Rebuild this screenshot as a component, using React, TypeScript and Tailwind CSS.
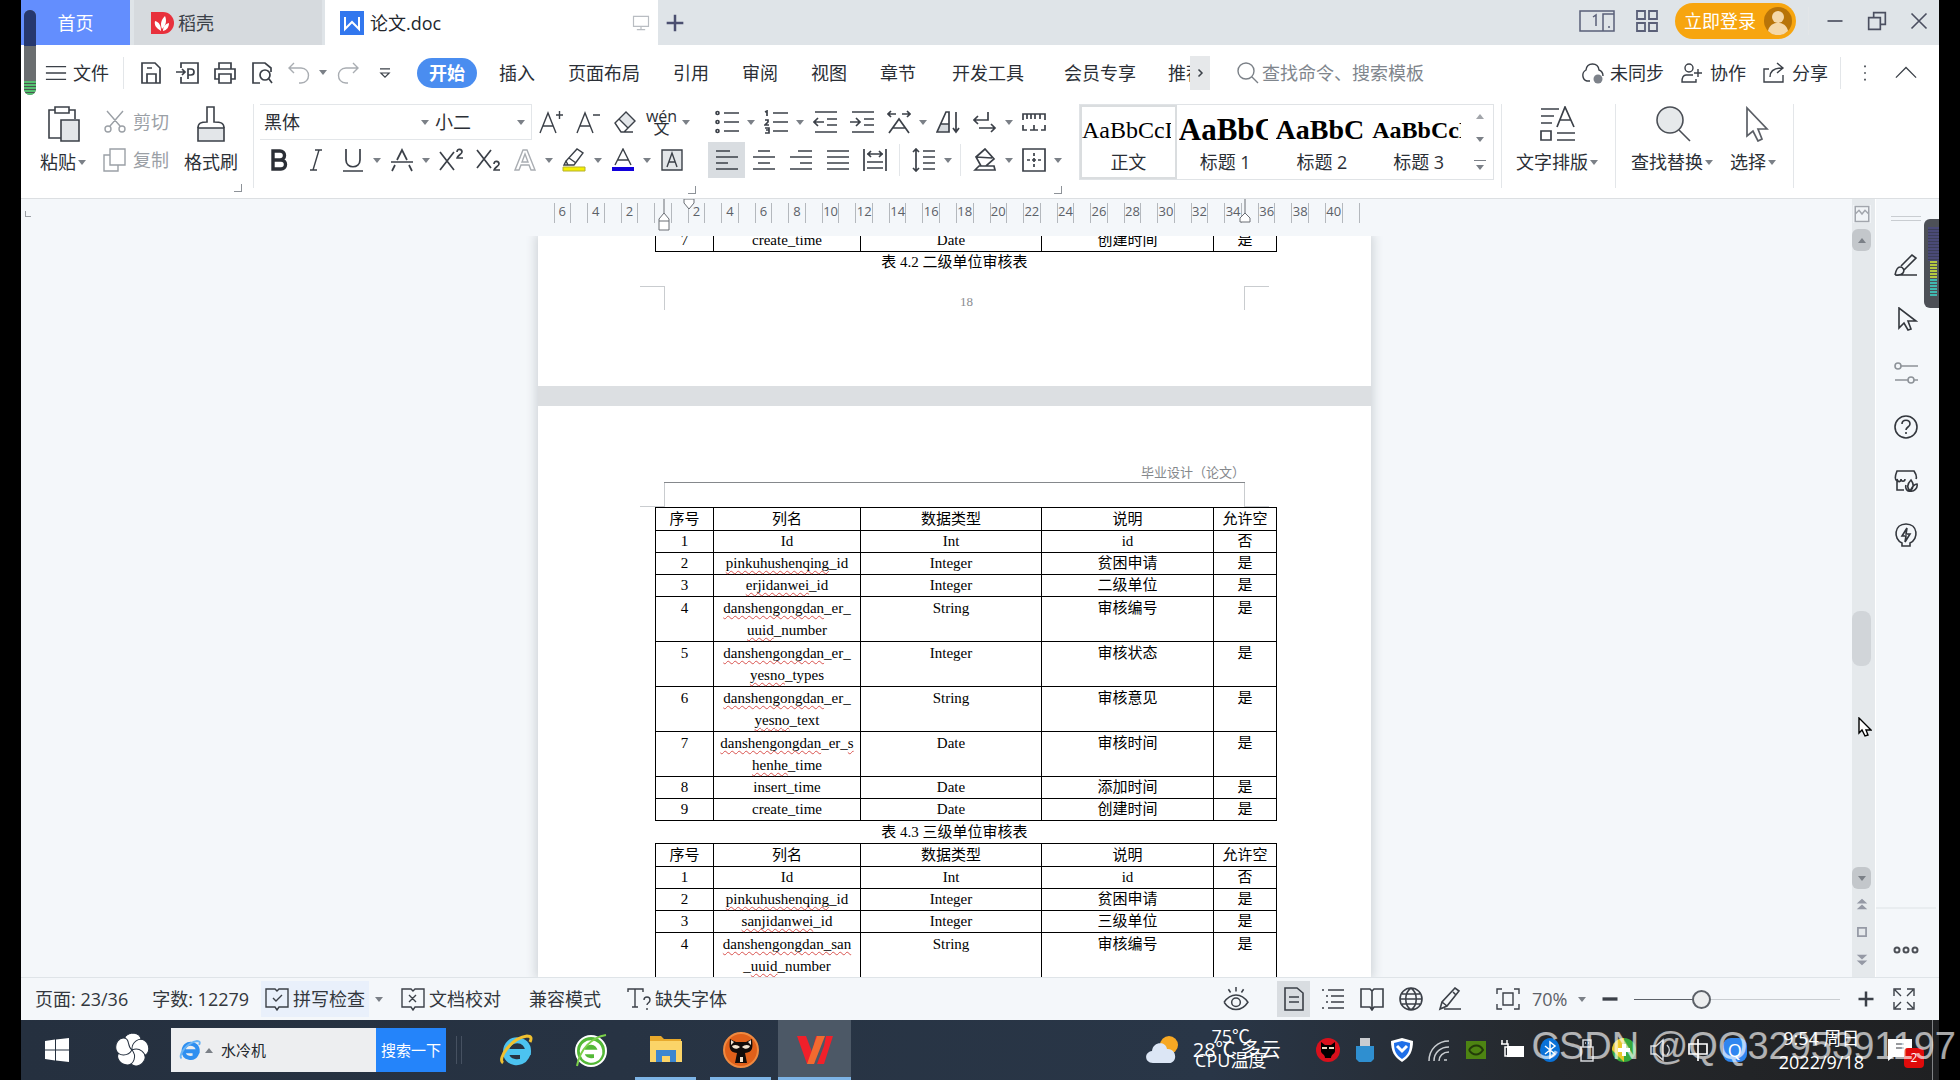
import React from 'react';
import clsx from 'clsx';

type IconProps = {
  d: string;
  size?: string;
  tone?: string;
  weight?: string;
  fill?: string;
  extra?: React.ReactNode;
  className?: string;
};

const Icon: React.FC<IconProps> = ({
  d,
  size = 'size-6',
  tone = 'stroke-[#3b4048]',
  weight = 'stroke-[1.4]',
  fill = 'fill-none',
  extra,
  className,
}) => (
  <svg viewBox="0 0 24 24" className={clsx('shrink-0', size, tone, weight, fill, className)}>
    {extra}
    <path d={d} />
  </svg>
);

const Caret: React.FC<{ className?: string }> = ({ className }) => (
  <span className={clsx('flex w-3 shrink-0 justify-center', className)}>
    <svg viewBox="0 0 8 5" className="h-[5px] w-2 fill-[#7b8087]"><path d="M0 0h8L4 5z" /></svg>
  </span>
);

const Tool: React.FC<{ label: string; active?: boolean; children: React.ReactNode }> = ({ label, active, children }) => (
  <button type="button" aria-label={label} className={clsx('flex h-9 w-[37px] shrink-0 items-center justify-center', active && 'bg-[#d9dde1]')}>
    {children}
  </button>
);

const Line: React.FC<{ className?: string }> = ({ className }) => (
  <span className={clsx('w-px shrink-0 bg-[#e3e6e9]', className ?? 'h-8')} />
);

const Corner = () => <span className="mt-1.5 -mr-1 h-2 w-2 self-end border-r border-b border-[#8d9298]" />;

/* ---------- title bar ---------- */

const TitleBar = () => (
  <header className="flex h-[45px] shrink-0 items-stretch bg-[#dfe4e8] text-lg leading-6">
    <button type="button" className="w-[109px] bg-[#638efe] text-center text-white">首页</button>
    <button type="button" className="ml-1 flex w-[188px] items-center gap-1 bg-[#d6dade] px-4 text-[#3b4048]">
      <svg viewBox="0 0 24 24" className="size-6">
        <path d="M1 1h12a11 11 0 0 1 0 22H1z" className="fill-[#e8303c]" />
        <path d="M11 20C6 17 4 14 5 10c4 1 6 4 6 10zM12 18c-2-5-1-9 3-13 2 5 1 9-3 13zM13 20c0-4 2-7 6-8 0 4-2 7-6 8z" className="fill-white" />
      </svg>
      稻壳
    </button>
    <button type="button" className="ml-[3px] flex w-[333px] items-center gap-1.5 bg-white px-[15px] text-[#23272d]">
      <svg viewBox="0 0 24 24" className="size-6">
        <path d="M0 0h24v24H0z" className="fill-[#3277ee]" />
        <path d="M5 6v12l7-7 7 7V6" className="fill-none stroke-white stroke-2" />
      </svg>
      论文.doc
      <Icon d="M3 4h18v12H3zM12 16v4M7 20h10" size="size-5" tone="stroke-[#b9bdc2]" className="ml-auto -mr-2" />
    </button>
    <button type="button" aria-label="新建" className="flex w-[34px] items-center justify-center">
      <Icon d="M12 2v20M2 12h20" size="size-5" tone="stroke-[#4b4f70]" weight="stroke-[3]" />
    </button>
    <div className="ml-auto flex items-center pb-1">
      <button type="button" aria-label="窗口" className="px-4">
        <svg viewBox="0 0 36 24" className="h-6 w-9 fill-none stroke-[#5a5f78] stroke-[1.5]">
          <path d="M1 2h34v20H1zM24 5h11v17H24zM14 8l3-2v11M29 18h2" />
        </svg>
      </button>
      <button type="button" aria-label="应用" className="pl-1 pr-4">
        <Icon d="M2 2h8v8H2zM14 2h8v8h-8zM2 14h8v8H2zM14 14h8v8h-8z" tone="stroke-[#5a5f78]" weight="stroke-[1.8]" />
      </button>
      <button type="button" className="flex h-9 w-[121px] items-center justify-between rounded-full bg-[#f7a50f] pl-[9px] pr-1 text-white">
        立即登录
        <svg viewBox="0 0 28 28" className="size-7">
          <circle cx="14" cy="14" r="14" className="fill-[#b87408]" />
          <circle cx="14" cy="10" r="6" className="fill-[#f5d8a8]" />
          <path d="M4 24c2-11 18-11 20 0a14 14 0 0 1-20 0z" className="fill-[#f5d8a8]" />
        </svg>
      </button>
      <Line className="ml-3 h-7" />
      <button type="button" aria-label="最小化" className="ml-4"><Icon d="M3 12h18" size="size-5" tone="stroke-[#4b4f60]" weight="stroke-2" /></button>
      <button type="button" aria-label="还原" className="ml-[22px]"><Icon d="M2 8h14v14H2zM8 8V2h14v14h-6" size="size-5" tone="stroke-[#4b4f60]" weight="stroke-2" /></button>
      <button type="button" aria-label="关闭" className="ml-[22px] mr-2.5"><Icon d="M3 3l18 18M21 3L3 21" size="size-5" tone="stroke-[#4b4f60]" weight="stroke-2" /></button>
    </div>
  </header>
);

/* ---------- menu row ---------- */

const QUICK = [
  { label: '保存', d: 'M3 2h13l5 5v15H3zM8 22v-9h9v9M8 7h5' },
  { label: '输出为PDF', d: 'M5 7V2h17v20H5v-6M0 11h9M6 8l3 3-3 3M12 18V8h3a3 3 0 0 1 0 6h-3' },
  { label: '打印', d: 'M6 8V2h12v6M6 18H2V8h20v10h-4M6 13h12v9H6z' },
  { label: '打印预览', d: 'M10 22H3V2h12l6 5v4M19 18l3 4M15 9a5 5 0 1 1 0 10 5 5 0 0 1 0-10' },
];

const MenuRow = () => (
  <nav className="flex h-[55px] shrink-0 items-center pl-6 text-lg leading-6 text-[#2b2f36]">
    <button type="button" className="flex items-center gap-1.5 whitespace-nowrap">
      <Icon d="M1 5h22M1 12h22M1 19h22" size="size-[22px]" />文件
    </button>
    <Line className="ml-3.5 h-8" />
    <div className="ml-2 flex">
      {QUICK.map((q) => (
        <Tool key={q.label} label={q.label}><Icon d={q.d} weight="stroke-[1.7]" /></Tool>
      ))}
      <Tool label="撤销"><Icon d="M7 2L2 7l5 5M2 7h12c10 0 10 15 0 15h-2" tone="stroke-[#a9adb2]" /></Tool>
      <span className="flex items-center"><Caret /></span>
      <Tool label="恢复"><Icon d="M17 2l5 5-5 5M22 7H10C0 7 0 22 10 22h2" tone="stroke-[#a9adb2]" /></Tool>
      <Tool label="更多"><Icon d="M6 7h12M7 12l5 5 5-5z" size="size-5" /></Tool>
    </div>
    <button type="button" className="ml-3.5 h-[30px] w-[60px] shrink-0 rounded-full bg-[#4a8df0] font-bold text-white">开始</button>
    <div className="ml-[22px] flex gap-[33px] whitespace-nowrap">
      {['插入', '页面布局', '引用', '审阅', '视图', '章节'].map((m) => (
        <button key={m} type="button">{m}</button>
      ))}
    </div>
    <div className="ml-9 flex gap-10 whitespace-nowrap">
      <button type="button">开发工具</button>
      <button type="button">会员专享</button>
    </div>
    <button type="button" className="ml-8 w-[22px] overflow-hidden whitespace-nowrap text-left">推荐</button>
    <button type="button" aria-label="展开" className="flex h-[34px] w-5 items-center justify-center bg-[#e6e8ea]">
      <Icon d="M9 5l7 7-7 7" size="size-3" weight="stroke-[3]" />
    </button>
    <label className="ml-[26px] flex items-center gap-0.5">
      <Icon d="M10 2a8 8 0 1 1 0 16 8 8 0 0 1 0-16M16 16l6 6" tone="stroke-[#7b8087]" />
      <span className="sr-only">搜索</span>
      <input type="text" placeholder="查找命令、搜索模板" className="w-44 outline-none placeholder:text-[#80868d]" />
    </label>
    <div className="ml-auto flex items-center whitespace-nowrap">
      <button type="button" className="flex items-center gap-1.5">
        <Icon d="M10 20H7a6 6 0 0 1-1-11C7 1 18 1 19 9c3 1 4 3 4 6" extra={<circle cx="18" cy="18" r="4.5" className="fill-[#7d828a] stroke-none" />} />未同步
      </button>
      <button type="button" className="ml-4 flex items-center gap-1.5">
        <Icon d="M9 3a4 4 0 1 1 0 8 4 4 0 0 1 0-8M13 14H6c-3 0-4 2-4 7h14v-3M18 8v8M14 12h8" />协作
      </button>
      <button type="button" className="ml-4 flex items-center gap-1.5">
        <Icon d="M7 8H2v13h19v-7M8 16c0-6 4-9 12-9M15 2l6 5-6 5" />分享
      </button>
      <Line className="ml-3 h-8" />
      <button type="button" aria-label="更多选项" className="ml-3.5"><Icon d="M11 4h2M11 12h2M11 20h2" size="size-5" weight="stroke-2" /></button>
      <button type="button" aria-label="收起功能区" className="ml-5 mr-[22px]"><Icon d="M1 17L12 6l11 11" size="size-[22px]" /></button>
    </div>
  </nav>
);

/* ---------- ribbon ---------- */

const STYLES = [
  { name: '正文', cls: 'text-2xl', on: true },
  { name: '标题 1', cls: 'text-[31px] font-bold', on: false },
  { name: '标题 2', cls: 'text-[28px] font-bold', on: false },
  { name: '标题 3', cls: 'text-2xl font-bold', on: false },
];

const BigButton: React.FC<{ label: string; caret?: boolean; children: React.ReactNode }> = ({ label, caret, children }) => (
  <button type="button" className="flex flex-col items-center gap-1 whitespace-nowrap pt-0.5">
    {children}
    <span className="flex items-center leading-8">{label}{caret && <Caret />}</span>
  </button>
);

const Ribbon = () => (
  <section className="flex h-[99px] shrink-0 items-start border-b border-[#dcdfe2] pt-1 text-lg text-[#2b2f36]">
    <div className="flex gap-[15px] pl-[19px]">
      <BigButton label="粘贴" caret>
        <svg viewBox="0 0 34 36" className="h-9 w-[34px] fill-none stroke-[#3b4048] stroke-[1.6]">
          <path d="M8 4H2v28h12M22 4h6v9M8 1h14v6H8z" />
          <path d="M14 14h18v21H14z" className="fill-[#e3e6e9]" />
        </svg>
      </BigButton>
      <div className="flex flex-col gap-0.5 text-[#9ba0a6]">
        <button type="button" className="flex h-9 items-center gap-1.5">
          <Icon d="M4 1l13 15M20 1L7 16M5 16a3 3 0 1 1 0 6 3 3 0 0 1 0-6M19 16a3 3 0 1 1 0 6 3 3 0 0 1 0-6" tone="stroke-[#9ba0a6]" />剪切
        </button>
        <button type="button" className="flex h-9 items-center gap-1.5">
          <Icon d="M7 1h15v16H7zM7 7H1v16h14v-6" tone="stroke-[#9ba0a6]" />复制
        </button>
      </div>
      <div className="flex flex-col">
        <BigButton label="格式刷">
          <svg viewBox="0 0 34 36" className="h-9 w-[34px] fill-none stroke-[#3b4048] stroke-[1.6]">
            <path d="M4 22h26v13H4z" className="fill-[#e3e6e9]" />
            <path d="M4 22c0-5 3-6 9-6V1h7v15c7 0 10 1 10 6" />
          </svg>
        </BigButton>
        <Corner />
      </div>
    </div>
    <Line className="ml-[15px] h-[84px]" />

    <div className="ml-1.5 flex flex-col gap-0.5">
      <div className="flex items-center">
        <div className="flex h-9 border-y border-[#e3e6e9]">
          <label className="flex w-[171px] items-center">
            <span className="sr-only">字体</span>
            <select className="w-full appearance-none pl-1 outline-none"><option>黑体</option></select><Caret />
          </label>
          <label className="flex w-[101px] items-center border-r border-[#e3e6e9] pr-1">
            <span className="sr-only">字号</span>
            <select className="w-full appearance-none pl-1 outline-none"><option>小二</option></select><Caret />
          </label>
        </div>
        <Tool label="增大字号"><Icon d="M1 23L9 3l8 20M4 16h10M17 5h7M20.500 1v8" /></Tool>
        <Tool label="减小字号"><Icon d="M1 23L9 3l8 20M4 16h10M17 5h7" /></Tool>
        <Tool label="清除格式"><Icon d="M2 13L13 2l9 9-11 11H8zM6 9l9 9M8 22h12" extra={<path d="M7 9l6-7 9 9-7 7z" className="fill-[#e3e6e9] stroke-none" />} /></Tool>
        <Tool label="拼音指南"><span className="flex flex-col items-center text-base leading-3"><span>wén</span><span>文</span></span></Tool>
        <Caret />
      </div>
      <div className="flex items-center">
        <Tool label="加粗"><Icon d="M6 3h7a4.500 4.500 0 0 1 0 9H6zM6 12h8a4.500 4.500 0 0 1 0 9H6z" tone="stroke-[#2b2f36]" weight="stroke-[3.4]" /></Tool>
        <Tool label="倾斜"><Icon d="M11 2h7M6 22h7M15 2L9 22" /></Tool>
        <Tool label="下划线"><Icon d="M5 1v11c0 9 14 9 14 0V1M2 23h20" weight="stroke-[1.7]" /></Tool>
        <Caret />
        <Tool label="删除线"><Icon d="M7 12l5-10 5 10M1 14h22M5 17l-3 6M19 17l3 6" weight="stroke-[1.7]" /></Tool>
        <Caret />
        <Tool label="上标"><Icon d="M1 4l14 18M15 4L1 22M18 4c0-4 5-3 5 0 0 2-5 4-5 6h6" weight="stroke-[1.7]" /></Tool>
        <Tool label="下标"><Icon d="M1 2l14 18M15 2L1 20M18 16c0-4 5-3 5 0 0 2-5 4-5 6h6" weight="stroke-[1.7]" /></Tool>
        <Tool label="文字效果"><Icon d="M2 22L10 2h4l8 20h-4l-2-5H8l-2 5zM9 14h6l-3-8z" tone="stroke-[#a9adb2]" /></Tool>
        <Caret />
        <Tool label="突出显示"><Icon d="M6 17l-2-4L15 1l6 4-9 12zM7 10l7 5M4 13l-2 4h4" extra={<path d="M1 19h22v4H1z" className="fill-[#f5f000] stroke-[#b5b030] stroke-1" />} /></Tool>
        <Caret />
        <Tool label="字体颜色"><Icon d="M4 17l8-16 8 16M7 12h10" extra={<path d="M1 19h22v4H1z" className="fill-[#1200dc] stroke-none" />} /></Tool>
        <Caret />
        <Tool label="字符底纹"><Icon d="M2 2h20v20H2zM7 19l5-14 5 14M9 14h6" extra={<path d="M2 2h20v20H2z" className="fill-[#e3e6e9] stroke-none" />} /></Tool>
      </div>
      <Corner />
    </div>

    <div className="ml-4 flex flex-col gap-0.5">
      <div className="flex items-center">
        <Tool label="项目符号"><Icon d="M9 3h15M9 12h15M9 21h15M1 3a1.500 1.500 0 1 0 3 0 1.500 1.500 0 1 0-3 0M1 12a1.500 1.500 0 1 0 3 0 1.500 1.500 0 1 0-3 0M1 21a1.500 1.500 0 1 0 3 0 1.500 1.500 0 1 0-3 0" weight="stroke-[1.7]" /></Tool>
        <Caret />
        <Tool label="编号"><Icon d="M9 3h15M9 12h15M9 21h15M1 2l2-1v5M1 10h3v2l-3 3h4M1 18h4v5H1M2 20h3" weight="stroke-[1.7]" /></Tool>
        <Caret />
        <Tool label="减少缩进"><Icon d="M2 2h22M14 9h10M14 15h10M2 22h22M1 12h10M5 8l-4 4 4 4" weight="stroke-[1.7]" /></Tool>
        <Tool label="增加缩进"><Icon d="M2 2h22M14 9h10M14 15h10M2 22h22M0 12h10M6 8l4 4-4 4" weight="stroke-[1.7]" /></Tool>
        <Tool label="字符缩放"><Icon d="M2 23L12 9l10 14M6 18h12M1 4h8M15 4h8M4 1L1 4l3 3M20 1l3 3-3 3" weight="stroke-[1.7]" /></Tool>
        <Caret />
        <Tool label="排序"><Icon d="M1 22L10 2h3v20zM5 14h8M20 2v20M17 18l3 4 3-4" weight="stroke-[1.7]" extra={<path d="M5 14h8v8H1z" className="fill-[#d5d9dd] stroke-none" />} /></Tool>
        <Tool label="换行"><Icon d="M15 2v8H1M5 6l-4 4 4 4M6 18h16M18 14l4 4-4 4" weight="stroke-[1.7]" /></Tool>
        <Caret />
        <Tool label="制表位"><Icon d="M1 10V4h22v6M5 4v5M9 4v5M13 4v5M18 4v5M1 15v5h4M8 20h8M12 15v5M19 20h4v-5" weight="stroke-[1.7]" /></Tool>
      </div>
      <div className="flex items-center">
        <Tool label="左对齐" active><Icon d="M1 3h14M1 9h22M1 15h12M1 21h22" weight="stroke-[1.7]" /></Tool>
        <Tool label="居中"><Icon d="M6 3h12M1 9h22M6 15h12M1 21h22" weight="stroke-[1.7]" /></Tool>
        <Tool label="右对齐"><Icon d="M9 3h14M1 9h22M11 15h12M1 21h22" weight="stroke-[1.7]" /></Tool>
        <Tool label="两端对齐"><Icon d="M1 3h22M1 9h22M1 15h22M1 21h22" weight="stroke-[1.7]" /></Tool>
        <Tool label="分散对齐"><Icon d="M1 1v22M23 1v22M4 14h16M4 20h16M4 6h16M8 3L5 6l3 3M16 3l3 3-3 3" weight="stroke-[1.7]" /></Tool>
        <span className="flex w-3 justify-center"><Line /></span>
        <Tool label="行距"><Icon d="M11 3h12M11 9h12M11 15h12M11 21h12M4 1v22M1 4l3-3 3 3M1 20l3 3 3-3" weight="stroke-[1.7]" /></Tool>
        <Caret />
        <span className="flex w-3 justify-center"><Line /></span>
        <Tool label="底纹颜色"><Icon d="M3 9l9-8 9 10-8 7H8zM3 9l16 1M2 22l4-4h15l1 4z" weight="stroke-[1.7]" /></Tool>
        <Caret />
        <Tool label="边框"><Icon d="M1 1h22v22H1zM12 5v3M12 10v4M12 16v3M5 12h3M10 12h4M16 12h3" weight="stroke-[1.7]" /></Tool>
        <Caret />
      </div>
      <span className="mr-1.5 flex flex-col"><Corner /></span>
    </div>

    <div className="ml-[15px] flex h-[76px] w-[415px] shrink-0 border border-[#e0e3e6]">
      <div className="grid min-w-0 flex-1 grid-cols-4">
        {STYLES.map((s) => (
          <button key={s.name} type="button" className={clsx('overflow-hidden border-2', s.on ? 'border-[#dadddf]' : 'border-transparent')}>
            <span className={clsx('mr-1 block h-10 overflow-hidden whitespace-nowrap text-left font-["Liberation_Serif",serif] leading-[44px] text-black', s.cls)}>AaBbCcD</span>
            <span className="block leading-7">{s.name}</span>
          </button>
        ))}
      </div>
      <div className="flex w-[26px] flex-col items-center justify-around">
        <button type="button" aria-label="上一行"><Caret className="rotate-180 opacity-70" /></button>
        <button type="button" aria-label="下一行"><Caret /></button>
        <button type="button" aria-label="更多样式" className="border-t border-[#7b8087] pt-1"><Caret /></button>
      </div>
    </div>

    <Line className="ml-[7px] h-[84px]" />
    <div className="ml-3.5 flex gap-[15px]">
      <BigButton label="文字排版" caret>
        <svg viewBox="0 0 36 36" className="size-9 fill-none stroke-[#3b4048] stroke-[1.7]">
          <path d="M1 3h18M1 10h13M1 17h11M1 25h10v9H1zM17 27h18M17 34h18M17 21l8-20 9 20M20 14h11" />
        </svg>
      </BigButton>
      <Line className="h-[84px]" />
      <BigButton label="查找替换" caret>
        <svg viewBox="0 0 36 36" className="size-9 fill-none stroke-[#4b4f56] stroke-[1.6]">
          <circle cx="15" cy="14" r="13" className="fill-[#e6e9eb]" />
          <path d="M24 24l11 11" />
        </svg>
      </BigButton>
      <BigButton label="选择" caret>
        <svg viewBox="0 0 36 36" className="size-9 fill-none stroke-[#5b5f66] stroke-[1.7]">
          <path d="M11 2v28l6-5 5 10 4-2-4-10h9z" />
        </svg>
      </BigButton>
      <Line className="h-[84px]" />
    </div>
  </section>
);

/* ---------- document ---------- */

const RULER = [6, 4, 2, 0, 2, 4, 6, 8, 10, 12, 14, 16, 18, 20, 22, 24, 26, 28, 30, 32, 34, 36, 38, 40];

const Ruler = () => (
  <div className="flex h-[37px] shrink-0 items-start pt-1">
    <span className="ml-1 mt-2 size-1.5 border-b border-l border-[#9ba0a6]" />
    <div className="flex flex-1 justify-center pl-[25px]">
      <div className="relative flex w-[833px] pl-2">
        <div className="grid w-[805px] shrink-0 auto-cols-fr grid-flow-col text-[13px] leading-4 text-[#5c6168]">
          {RULER.map((n, i) => (
            <span key={i} className="mx-2 flex h-5 justify-center border-x border-[#b4b8bd]">{n || ''}</span>
          ))}
        </div>
        <span className="ml-2 h-5 w-px bg-[#b4b8bd]" />
        <svg viewBox="0 0 14 32" className="absolute -top-1 left-[119px] h-8 w-3.5 fill-white stroke-[#6a6e75]"><path d="M7 0v14l-5 6v11h10V20l-5-6M2 22h10" /></svg>
        <svg viewBox="0 0 14 12" className="absolute -top-1 left-[144px] h-3 w-3.5 fill-white stroke-[#6a6e75]"><path d="M2 0h10v4l-5 6-5-6z" /></svg>
        <svg viewBox="0 0 14 24" className="absolute -top-1 left-[700px] h-6 w-3.5 fill-white stroke-[#6a6e75]"><path d="M7 0v14l-5 5v4h10v-4l-5-5" /></svg>
      </div>
    </div>
  </div>
);

// asterisks wrap the part that the spell checker underlines
type Row = [string, string[], string, string, string];

const TAIL_ROW: Row[] = [['7', ['create_time'], 'Date', '创建时间', '是']];

const SECOND_LEVEL: Row[] = [
  ['1', ['Id'], 'Int', 'id', '否'],
  ['2', ['*pinkuhushenqing*_id'], 'Integer', '贫困申请', '是'],
  ['3', ['*erjidanwei*_id'], 'Integer', '二级单位', '是'],
  ['4', ['*danshengongdan*_er_', '*uuid*_number'], 'String', '审核编号', '是'],
  ['5', ['*danshengongdan*_er_', '*yesno*_types'], 'Integer', '审核状态', '是'],
  ['6', ['*danshengongdan*_er_', '*yesno*_text'], 'String', '审核意见', '是'],
  ['7', ['*danshengongdan*_er_*s*', '*henhe*_time'], 'Date', '审核时间', '是'],
  ['8', ['insert_time'], 'Date', '添加时间', '是'],
  ['9', ['create_time'], 'Date', '创建时间', '是'],
];

const THIRD_LEVEL: Row[] = [
  ['1', ['Id'], 'Int', 'id', '否'],
  ['2', ['*pinkuhushenqing*_id'], 'Integer', '贫困申请', '是'],
  ['3', ['*sanjidanwei*_id'], 'Integer', '三级单位', '是'],
  ['4', ['*danshengongdan_san*', '_*uuid*_number'], 'String', '审核编号', '是'],
];

const Spelled: React.FC<{ text: string }> = ({ text }) => (
  <span className="block">
    {text.split('*').map((part, i) =>
      i % 2 ? (
        <span key={i} className="underline decoration-[#d9534f] decoration-wavy decoration-1 underline-offset-2 [text-decoration-skip-ink:none]">{part}</span>
      ) : (
        part
      ),
    )}
  </span>
);

const DocTable: React.FC<{ rows: Row[]; head?: boolean }> = ({ rows, head = true }) => (
  <table className="ml-[117px] w-[622px] table-fixed border-collapse text-center [&_td]:border [&_td]:border-black [&_td]:p-0 [&_td]:align-top [&_th]:border [&_th]:border-black [&_th]:p-0 [&_th]:font-normal">
    <colgroup>
      <col className="w-[58px]" />
      <col className="w-[147px]" />
      <col className="w-[181px]" />
      <col className="w-[172px]" />
      <col />
    </colgroup>
    {head && (
      <thead>
        <tr className="leading-[22px]">
          {['序号', '列名', '数据类型', '说明', '允许空'].map((h) => (
            <th key={h}>{h}</th>
          ))}
        </tr>
      </thead>
    )}
    <tbody>
      {rows.map(([no, name, type, note, empty]) => (
        <tr key={no} className={name.length > 1 ? 'leading-[22px]' : 'leading-[21px]'}>
          <td>{no}</td>
          <td>{name.map((n) => <Spelled key={n} text={n} />)}</td>
          <td>{type}</td>
          <td>{note}</td>
          <td>{empty}</td>
        </tr>
      ))}
    </tbody>
  </table>
);

const CropMarks: React.FC<{ flip?: boolean }> = ({ flip }) => (
  <div className="mx-[102px] flex h-6 justify-between">
    <span className={clsx('w-[25px] border-r border-[#c9cccf]', flip ? 'border-b' : 'border-t')} />
    <span className={clsx('w-[25px] border-l border-[#c9cccf]', flip ? 'border-b' : 'border-t')} />
  </div>
);

const DocumentArea = () => (
  <main className="flex min-h-0 flex-1 justify-center overflow-hidden pl-9 font-['Liberation_Serif','Noto_Sans_CJK_SC',serif] text-[15px] text-black">
    <div className="w-[833px] shrink-0 bg-[#dcdfe2] shadow-[0_0_10px_2px_#cdd2d6]">
      <article className="h-[150px] overflow-hidden bg-white">
        <div className="-mt-[7px]">
          <DocTable rows={TAIL_ROW} head={false} />
          <p className="text-center leading-5">表 4.2 二级单位审核表</p>
          <div className="pt-3.5"><CropMarks /></div>
          <p className="-mt-4 pl-6 text-center text-[13px] leading-4 text-[#8a8d91]">18</p>
        </div>
      </article>
      <article className="mt-5 min-h-[571px] bg-white pt-[58px]">
        <header className="mx-[126px] border-b border-[#85888c] text-right text-[13px] leading-[18px] text-[#85888c]">毕业设计（论文）</header>
        <CropMarks flip />
        <DocTable rows={SECOND_LEVEL} />
        <p className="text-center leading-[22px]">表 4.3 三级单位审核表</p>
        <DocTable rows={THIRD_LEVEL} />
      </article>
    </div>
  </main>
);

const ScrollColumn = () => (
  <div className="relative flex w-[23px] shrink-0 flex-col items-center bg-[#e5e9ec] pr-1">
    <Icon d="M3 2h18v20H3zM3 12l5-5 4 5 4-5 5 5" size="size-[18px]" tone="stroke-[#a2a6ad]" weight="stroke-2" className="mt-1.5 bg-[#f1f4f7]" />
    <button type="button" aria-label="向上滚动" className="mt-1.5 flex h-[22px] w-[19px] items-center justify-center rounded-md bg-[#c3c7cb]"><Caret className="rotate-180" /></button>
    <span className="h-[360px] shrink" />
    <span className="h-[55px] w-[19px] shrink-0 rounded-lg bg-[#d1d5d9]" />
    <svg viewBox="0 0 14 20" className="absolute left-1.5 top-[518px] h-5 w-3.5 fill-white stroke-black stroke-[1.4]"><path d="M1 1v15l3-3 3 6 3-1-2-5h5z" /></svg>
    <button type="button" aria-label="向下滚动" className="mt-auto flex h-[22px] w-[19px] items-center justify-center rounded-md bg-[#c3c7cb]"><Caret /></button>
    <button type="button" aria-label="上一页" className="mt-2"><Icon d="M3 11l9-8 9 8zM3 21l9-8 9 8z" size="size-[14px]" tone="stroke-none" fill="fill-[#9599a5]" /></button>
    <button type="button" aria-label="选择浏览对象" className="mt-3.5"><Icon d="M5 5h14v14H5z" size="size-[14px]" tone="stroke-[#9599a5]" weight="stroke-[3]" /></button>
    <button type="button" aria-label="下一页" className="mb-2.5 mt-3.5"><Icon d="M3 3l9 8 9-8zM3 13l9 8 9-8z" size="size-[14px]" tone="stroke-none" fill="fill-[#9599a5]" /></button>
  </div>
);

const SIDE = [
  { label: '画笔', d: 'M1 22h22M1 22c1-5 2-8 5-8s5 3 3 6-5 2-8 2M7 13L18 2l4 3-12 12' },
  { label: '选择', d: 'M5 1v20l5-5 4 7 3-1-3-8h8z' },
  { label: '属性', d: 'M7 5h17M1 19h13M20 19h4M1 5a3 3 0 1 0 6 0 3 3 0 1 0-6 0M14 19a3 3 0 1 0 6 0 3 3 0 1 0-6 0', muted: true },
  { label: '帮助', d: 'M12 1a11 11 0 1 1 0 22 11 11 0 0 1 0-22M8 9c0-5 8-5 8 0 0 3-4 3-4 6M12 17v2' },
  { label: '素材', d: 'M10 21H3V12M3 12C1 11 1 7 3 2h17c2 3 3 6 2 8M3 10c1 4 4 3 4 0 0 3 4 3 4 0M16 22c-3-3-3-7 1-11 3 4 3 8-1 11M16 22c-3 1-5-3-4-6M16 22c4 1 8-3 7-7-3 0-5 3-7 7' },
  { label: '灵感', d: 'M8 20v3h8v-3c9-4 8-19-4-19S-1 16 8 20zM13 5l-5 8h4l-1 6 5-8h-4z' },
];

const SidePanel = () => (
  <aside className="flex w-16 shrink-0 flex-col items-center border-l border-white pr-[3px]">
    <span className="mt-[17px] h-[5px] w-[30px] border-y border-[#c9cdd1]" />
    <div className="mt-8 flex flex-col gap-[30px]">
      {SIDE.map((s) => (
        <button key={s.label} type="button" aria-label={s.label}>
          <Icon d={s.d} weight="stroke-[1.6]" tone={s.muted ? 'stroke-[#8d9298]' : 'stroke-[#33373d]'} />
        </button>
      ))}
    </div>
    <div className="mt-auto flex h-[70px] w-full items-center justify-center border-t-2 border-[#e9edf0] pt-3.5">
      <button type="button" aria-label="更多工具">
        <svg viewBox="0 0 26 8" className="h-2 w-[26px] fill-none stroke-[#4b4f56] stroke-2"><circle cx="4" cy="4" r="2.500" /><circle cx="13" cy="4" r="2.500" /><circle cx="22" cy="4" r="2.500" /></svg>
      </button>
    </div>
  </aside>
);

/* ---------- status bar ---------- */

const VIEWS = [
  { label: '页面视图', d: 'M3 1h12l6 5v17H3zM7 10h10M7 15h10' },
  { label: '大纲', d: 'M1 3h2M7 3h16M5 9h2M10 9h13M5 15h2M10 15h13M1 21h2M7 21h16' },
  { label: '阅读版式', d: 'M1 2h9l2 2 2-2h9v18h-9l-2 3-2-3H1zM12 4v18' },
  { label: 'Web版式', d: 'M12 1a11 11 0 1 1 0 22 11 11 0 0 1 0-22M12 1c-7 5-7 17 0 22M12 1c7 5 7 17 0 22M1 12h22M3 7h18M3 17h18' },
  { label: '写作模式', d: 'M2 22l2-7L17 1l4 3L9 19zM15 5l3 3M6 22h17M4 15l5 4' },
];

const StatusBar = () => (
  <footer className="flex h-[43px] shrink-0 items-center whitespace-nowrap border-t border-[#dfe4e8] bg-[#f4f7fa] pl-3.5 text-lg text-[#33373d]">
    <span>页面: 23/36</span>
    <span className="ml-6">字数: 12279</span>
    <button type="button" className="ml-3 flex h-9 items-center gap-1 bg-[#e9f0fb] px-1">
      <Icon d="M1 2h9l2 2 2-2h9v18h-9l-2 3-2-3H1zM8 11l3 3 6-6" />拼写检查
    </button>
    <Caret className="ml-1" />
    <button type="button" className="ml-4 flex items-center gap-1">
      <Icon d="M1 2h9l2 2 2-2h9v18h-9l-2 3-2-3H1zM8 8l7 7M15 8l-7 7" />文档校对
    </button>
    <button type="button" className="ml-7">兼容模式</button>
    <button type="button" className="ml-[26px] flex items-center gap-1">
      <Icon d="M1 5V2h15v3M8 2v18M5 20h6M17 13c0-4 6-4 6 0 0 3-3 3-3 5M20 21v2" />缺失字体
    </button>
    <div className="ml-auto flex items-center">
      <button type="button" aria-label="护眼模式" className="mr-7"><Icon d="M1 15c6-9 16-9 22 0-6 9-16 9-22 0M12 11a4 4 0 1 1 0 8 4 4 0 0 1 0-8M12 1v4M5 3l2 3M19 3l-2 3" size="size-[26px]" /></button>
      {VIEWS.map((v, i) => (
        <button key={v.label} type="button" aria-label={v.label} className={clsx('mr-1.5 flex h-9 w-[33px] items-center justify-center', i === 0 && 'bg-[#d9dde1]')}><Icon d={v.d} weight="stroke-[1.6]" /></button>
      ))}
      <button type="button" aria-label="适合页面" className="ml-6"><Icon d="M1 7V2h5M18 2h5v5M23 17v5h-5M6 22H1v-5M7 6h10v12H7z" /></button>
      <button type="button" className="ml-3 flex w-14 items-center justify-between text-[#5c6168]">70%<Caret /></button>
      <button type="button" aria-label="缩小" className="ml-3"><Icon d="M3 12h18" size="size-5" weight="stroke-[4]" /></button>
      <input
        type="range"
        aria-label="显示比例"
        defaultValue={31}
        className="ml-3.5 h-5 w-[206px] appearance-none bg-[linear-gradient(90deg,#5c6168_33%,#c9cdd1_33%)] bg-[length:100%_1px] bg-center bg-no-repeat [&::-webkit-slider-thumb]:size-[19px] [&::-webkit-slider-thumb]:appearance-none [&::-webkit-slider-thumb]:rounded-full [&::-webkit-slider-thumb]:border-2 [&::-webkit-slider-thumb]:border-[#5c6168] [&::-webkit-slider-thumb]:bg-[#eceeef]"
      />
      <button type="button" aria-label="放大" className="ml-4"><Icon d="M12 3v18M3 12h18" size="size-5" weight="stroke-[3]" /></button>
      <button type="button" aria-label="全屏" className="ml-4 mr-[23px]"><Icon d="M2 9V2h7M15 2h7v7M22 15v7h-7M9 22H2v-7M3 3l6 6M21 3l-6 6M21 21l-6-6M3 21l6-6" /></button>
    </div>
  </footer>
);

/* ---------- taskbar ---------- */

const EGlyph: React.FC<{ color: string; ring: string; className: string }> = ({ color, ring, className }) => (
  <svg viewBox="0 0 34 34" className={clsx('fill-none', className)}>
    <path d="M8 19h21c1-15-22-16-22 0 0 12 16 13 20 5h-6" className={clsx('stroke-[6]', color)} />
    <path d="M4 30C-2 26 12 5 28 3c4 0 5 2 3 6" className={clsx('stroke-[3]', ring)} />
  </svg>
);

const TRAY: { label: string; art: React.ReactNode }[] = [
  { label: '安全', art: <><ellipse cx="12" cy="12" rx="12" ry="12" className="fill-[#d8101c]" /><path d="M5 4l4 3h6l4-3v9c0 3-4 3-4 7H9c0-4-4-4-4-7z" className="fill-black" /><path d="M6 10h5M13 10h5" className="stroke-[#f0d8c0] stroke-2" /></> },
  { label: 'U盘', art: <><path d="M7 0h10v8H7z" className="fill-[#c9ccd0]" /><path d="M3 8h18v13l-3 3H6l-3-3z" className="fill-[#2f8fd0]" /></> },
  { label: '电脑管家', art: <><path d="M12 0l11 3c0 10-3 16-11 21C4 19 1 13 1 3z" className="fill-white" /><path d="M12 3l8 2c0 8-2 12-8 16-6-4-8-8-8-16z" className="fill-[#1f6fe8]" /><path d="M7 8l5 5 5-5" className="fill-none stroke-white stroke-[3]" /></> },
  { label: '网络', art: <path d="M2 23C2 11 11 3 22 3M7 23c0-9 7-14 15-14M12 23c0-5 4-9 10-9M17 22h3" className="fill-none stroke-[#c9cdd1] stroke-[1.5]" /> },
  { label: '显卡', art: <><path d="M2 3h20v18H2z" className="fill-[#4d8412]" /><path d="M5 12c4-6 11-6 14 0-4 6-10 6-14 0" className="fill-none stroke-[#233b0a] stroke-2" /></> },
  { label: '电池', art: <><path d="M6 8h17v11H6z" className="fill-white" /><path d="M1 2v4M6 2v4M0 6h7v3H4v9h3" className="fill-none stroke-white stroke-[1.5]" /></> },
  { label: '蓝牙', art: <><ellipse cx="12" cy="12" rx="10" ry="12" className="fill-[#0a72d8]" /><path d="M7 8l10 8-5 4V4l5 4-10 8" className="fill-none stroke-white stroke-[1.5]" /></> },
  { label: '弹出设备', art: <path d="M6 9h12v14H6zM8 9V2h8v7M10 5h1M13 5h1" className="fill-none stroke-[#d5d8db] stroke-[1.5]" /> },
  { label: '360', art: <><circle cx="12" cy="12" r="12" className="fill-[#37a93c]" /><path d="M0 12a12 12 0 0 1 12-12v24" className="fill-[#e8c82a]" /><path d="M12 6v12M6 12h12" className="stroke-white stroke-[4]" /></> },
  { label: '音量', art: <path d="M2 8h5l7-6v20l-7-6H2zM18 7c3 3 3 7 0 10" className="fill-none stroke-[#d5d8db] stroke-[1.5]" /> },
  { label: '输入法', art: <path d="M3 6h18v10H3zM12 1v22" className="fill-none stroke-white stroke-[1.7]" /> },
];

const Taskbar = () => (
  <footer className="flex h-[60px] shrink-0 items-center whitespace-nowrap bg-[linear-gradient(90deg,#25303f_0%,#293647_62%,#25282c_80%,#1f2022_100%)] text-white">
    <button type="button" aria-label="开始菜单" className="ml-6">
      <svg viewBox="0 0 24 24" className="size-6 fill-white"><path d="M0 3l10-1.500v10H0zM11 1.400L24 0v11.500H11zM0 12.500h10v10L0 21zM11 12.500h13V24l-13-1.400z" /></svg>
    </button>
    <button type="button" aria-label="助手" className="ml-[46px]">
      <svg viewBox="0 0 34 34" className="size-[34px] fill-white stroke-[#25303f] stroke-1">
        {[0, 72, 144, 216, 288].map((a) => (
          <path key={a} d="M17 17C9 15 7 6 12 2c6-4 14-1 14 5 0 5-7 4-9 10z" transform={`rotate(${a} 17 17)`} />
        ))}
      </svg>
    </button>
    <form className="ml-[22px] flex h-11 w-[275px] text-[15px]">
      <label className="flex flex-1 items-center bg-[#edeef0] pl-2 text-[#23272d]">
        <EGlyph color="stroke-[#2f8ff0]" ring="stroke-[#6ab4f5]" className="size-[22px] shrink-0" />
        <Caret className="ml-0.5 rotate-180" />
        <span className="sr-only">搜索网页</span>
        <input type="text" defaultValue="水冷机" className="ml-1.5 w-32 outline-none" />
      </label>
      <button type="button" className="w-[70px] bg-[#2484fa]">搜索一下</button>
    </form>
    <span className="ml-2.5 h-7 w-1.5 border-x border-[#465161]" />
    <div className="ml-4 flex h-full items-center">
      <button type="button" aria-label="浏览器" className="flex w-[75px] justify-center"><EGlyph color="stroke-[#4cc3f0]" ring="stroke-[#f0c030]" className="size-[34px]" /></button>
      <button type="button" aria-label="安全浏览器" className="flex w-[75px] justify-center">
        <svg viewBox="0 0 34 34" className="size-[34px] fill-none">
          <circle cx="17" cy="18" r="15" className="fill-[#53b837] stroke-white stroke-2" />
          <path d="M9 19h17c0-12-17-13-18-1 0 11 14 12 17 5h-5" className="stroke-white stroke-[4.5]" />
          <path d="M3 33C6 16 18 4 32 2" className="stroke-[#7bd04a] stroke-2" />
        </svg>
      </button>
      <button type="button" aria-label="文件资源管理器" className="flex h-full w-[75px] flex-col items-center justify-between">
        <svg viewBox="0 0 34 34" className="mt-3 size-[34px]">
          <path d="M1 4h11l3 3h17v23H1z" className="fill-[#e8a92c]" /><path d="M1 9h32v21H1z" className="fill-[#fbd468]" />
          <path d="M7 30V18h20v12h-6v-6h-8v6z" className="fill-[#3c86d0]" />
        </svg>
        <span className="h-[3px] w-[61px] bg-[#7db4e6]" />
      </button>
      <button type="button" aria-label="游戏助手" className="flex h-full w-[75px] flex-col items-center justify-between">
        <svg viewBox="0 0 36 36" className="mt-3 size-9">
          <circle cx="18" cy="18" r="17" className="fill-[#e0601a] stroke-[#f08a40] stroke-2" />
          <path d="M7 7l6 3h10l6-3c1 9 1 13-7 14l2 10H12l2-10C6 20 6 16 7 7z" className="fill-[#120c0a]" />
          <path d="M9 14c3-2 6-1 8 1-3 3-7 2-8-1zM27 14c-3-2-6-1-8 1 3 3 7 2 8-1zM8 8l3 2-3 3zM28 8l-3 2 3 3zM17 25h3v5h-3z" className="fill-[#f3e3cf]" />
        </svg>
        <span className="h-[3px] w-[61px] bg-[#7db4e6]" />
      </button>
      <button type="button" aria-label="WPS Office" className="flex h-full w-[73px] flex-col items-center justify-between bg-[#4c5866]">
        <svg viewBox="0 0 36 32" className="mt-3.5 h-8 w-9">
          <path d="M0 2h9l6 16 4-16h4l-6 28h-7zM27 30h-7l7-18 2-10h7z" className="fill-[#f0202a]" /><path d="M20 2h8L17 30h-7z" className="fill-[#f26a30]" />
        </svg>
        <span className="h-[3px] w-full bg-[#7db4e6]" />
      </button>
    </div>

    <div className="relative ml-auto flex h-full items-center">
      <svg viewBox="0 0 34 30" className="h-[30px] w-[34px]">
        <circle cx="24" cy="10" r="9" className="fill-[#f7a823]" />
        <path d="M8 28c-9 0-9-11-1-12C8 6 21 6 22 14c10-1 11 14 2 14z" className="fill-[#dce6f5]" />
      </svg>
      <span className="ml-3.5 w-[123px] text-xl">28℃ 多云</span>
      <span className="absolute left-12 top-1 w-[76px] text-center text-lg leading-6">75℃<br />CPU温度</span>
      <div className="flex gap-[13px]">
        {TRAY.map((t) => (
          <button key={t.label} type="button" aria-label={t.label}><svg viewBox="0 0 24 24" className="size-6">{t.art}</svg></button>
        ))}
        <button type="button" className="size-6 rounded-lg bg-[#2f86f0] text-lg leading-6">Q</button>
      </div>
      <time className="ml-8 text-center text-lg leading-6">9:54 周日<br />2022/9/18</time>
      <button type="button" aria-label="通知" className="relative ml-6 mr-5 size-6">
        <svg viewBox="0 0 24 24" className="size-6"><path d="M0 1h24v18H5l-5 4z" className="fill-white" /><path d="M8 6h8M8 10h8" className="stroke-[#33373d]" /></svg>
        <span className="absolute left-4 top-2.5 flex size-5 items-center justify-center rounded-sm bg-[#e00b0b] text-xs">2</span>
      </button>
      <Line className="mr-1.5 h-full opacity-50" />
    </div>
  </footer>
);

const App: React.FC = () => (
  <div className="relative flex h-screen flex-col overflow-hidden bg-black px-[21px] font-['Open_Sans','Noto_Sans_CJK_SC',sans-serif]">
    <div className="flex shrink-0 flex-col bg-white">
      <TitleBar />
      <MenuRow />
      <Ribbon />
    </div>
    <div className="flex min-h-0 flex-1 bg-[#f4f7fa]">
      <div className="flex min-w-0 flex-1 flex-col">
        <Ruler />
        <DocumentArea />
      </div>
      <ScrollColumn />
      <SidePanel />
    </div>
    <StatusBar />
    <Taskbar />

    {/* desktop meters floating over both edges */}
    <div className="absolute left-6 top-2.5 flex h-[85px] w-3 flex-col overflow-hidden rounded-md bg-[#6b6e70]">
      <span className="h-9 bg-[#26386f]" />
      <span className="mt-auto h-3.5 bg-[repeating-linear-gradient(#55c070_0_2px,#4a5550_2px_3px)]" />
    </div>
    <div className="absolute right-[21px] top-[219px] flex h-[89px] w-[15px] flex-col rounded-l-md bg-[#4d5057] py-2 pl-1">
      <span className="h-[34px] bg-[repeating-linear-gradient(#4a4a78_0_2px,#3c3e58_2px_3px)]" />
      <span className="ml-0.5 mr-0.5 h-[18px] bg-[repeating-linear-gradient(#b5c840_0_2px,#4d5057_2px_3px)]" />
      <span className="ml-0.5 mr-0.5 h-[18px] bg-[repeating-linear-gradient(#40b8b0_0_2px,#4d5057_2px_3px)]" />
    </div>
    <p className="pointer-events-none absolute right-1 bottom-3.5 whitespace-nowrap font-['Liberation_Sans',sans-serif] text-[38px] leading-10 text-white/65">CSDN @QQ3295391197</p>
  </div>
);

export default App;
